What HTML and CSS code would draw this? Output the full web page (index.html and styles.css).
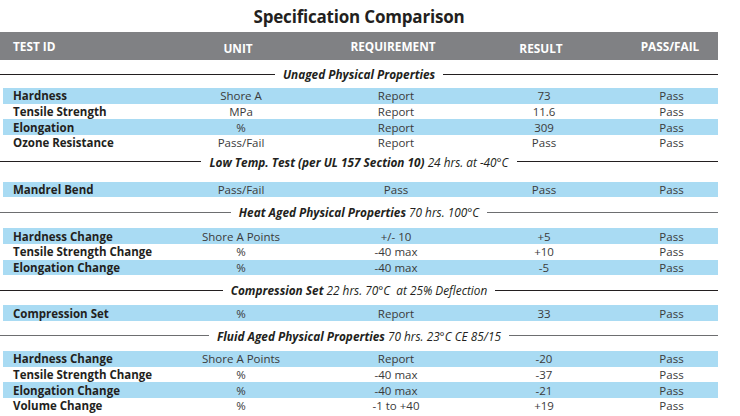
FILE: index.html
```html
<!DOCTYPE html>
<html lang="en">
<head>
<meta charset="utf-8">
<title>Specification Comparison</title>
<link rel="stylesheet" href="styles.css">
</head>
<body>
<div class="sheet">
  <h1 class="title">Specification Comparison</h1>
  <div class="thead grid">
    <div class="c1">TEST ID</div>
    <div class="c2 lower">UNIT</div>
    <div class="c3 upper">REQUIREMENT</div>
    <div class="c4 lower">RESULT</div>
    <div class="c5">PASS/FAIL</div>
  </div>

  <section class="sec sec-first">
    <div class="divider"><span class="dtext"><b>Unaged Physical Properties</b></span></div>
    <div class="rows">
      <div class="row grid band"><div class="c1">Hardness</div><div class="c2">Shore A</div><div class="c3">Report</div><div class="c4">73</div><div class="c5">Pass</div></div>
      <div class="row grid"><div class="c1">Tensile Strength</div><div class="c2">MPa</div><div class="c3">Report</div><div class="c4">11.6</div><div class="c5">Pass</div></div>
      <div class="row grid band"><div class="c1">Elongation</div><div class="c2">%</div><div class="c3">Report</div><div class="c4">309</div><div class="c5">Pass</div></div>
      <div class="row grid"><div class="c1">Ozone Resistance</div><div class="c2">Pass/Fail</div><div class="c3">Report</div><div class="c4">Pass</div><div class="c5">Pass</div></div>
    </div>
  </section>

  <section class="sec sec-lowtemp">
    <div class="divider"><span class="dtext"><b>Low Temp. Test (per UL 157 Section 10)</b> 24 hrs. at -40°C</span></div>
    <div class="rows">
      <div class="row grid band"><div class="c1">Mandrel Bend</div><div class="c2">Pass/Fail</div><div class="c3">Pass</div><div class="c4">Pass</div><div class="c5">Pass</div></div>
    </div>
  </section>

  <section class="sec sec-heat">
    <div class="divider divider-gray"><span class="dtext"><b>Heat Aged Physical Properties</b> 70 hrs. 100°C</span></div>
    <div class="rows">
      <div class="row grid band"><div class="c1">Hardness Change</div><div class="c2">Shore A Points</div><div class="c3">+/- 10</div><div class="c4">+5</div><div class="c5">Pass</div></div>
      <div class="row grid"><div class="c1">Tensile Strength Change</div><div class="c2">%</div><div class="c3">-40 max</div><div class="c4">+10</div><div class="c5">Pass</div></div>
      <div class="row grid band"><div class="c1">Elongation Change</div><div class="c2">%</div><div class="c3">-40 max</div><div class="c4">-5</div><div class="c5">Pass</div></div>
    </div>
  </section>

  <section class="sec">
    <div class="divider"><span class="dtext"><b>Compression Set</b> 22 hrs. 70°C&nbsp; at 25% Deflection</span></div>
    <div class="rows">
      <div class="row grid band"><div class="c1">Compression Set</div><div class="c2">%</div><div class="c3">Report</div><div class="c4">33</div><div class="c5">Pass</div></div>
    </div>
  </section>

  <section class="sec">
    <div class="divider divider-gray"><span class="dtext"><b>Fluid Aged Physical Properties</b> 70 hrs. 23°C CE 85/15</span></div>
    <div class="rows">
      <div class="row grid band"><div class="c1">Hardness Change</div><div class="c2">Shore A Points</div><div class="c3">Report</div><div class="c4">-20</div><div class="c5">Pass</div></div>
      <div class="row grid"><div class="c1">Tensile Strength Change</div><div class="c2">%</div><div class="c3">-40 max</div><div class="c4">-37</div><div class="c5">Pass</div></div>
      <div class="row grid band"><div class="c1">Elongation Change</div><div class="c2">%</div><div class="c3">-40 max</div><div class="c4">-21</div><div class="c5">Pass</div></div>
      <div class="row grid"><div class="c1">Volume Change</div><div class="c2">%</div><div class="c3">-1 to +40</div><div class="c4">+19</div><div class="c5">Pass</div></div>
    </div>
  </section>
</div>
</body>
</html>
```

FILE: styles.css
```css
html, body {
  margin: 0;
  padding: 0;
  background: #ffffff;
}

body {
  font-family: "Open Sans", "Liberation Sans", sans-serif;
  color: #3c3c3c;
  width: 740px;
  height: 416px;
  overflow: hidden;
}

.sheet {
  width: 718px;
}

.title {
  margin: 0;
  height: 32px;
  line-height: 34px;
  text-align: center;
  font-size: 17px;
  font-weight: 700;
  letter-spacing: -0.2px;
  color: #231f20;
}

.grid {
  display: grid;
  grid-template-columns: 170px 136px 174px 122px 1fr;
  align-items: center;
}

.grid > div {
  text-align: center;
  white-space: nowrap;
}

.grid > .c1 {
  text-align: left;
  padding-left: 13px;
}

.grid > .c5 {
  padding-left: 20px;
}

.thead {
  height: 28px;
  background: #808184;
  color: #ffffff;
  font-size: 11.8px;
  font-weight: 700;
  letter-spacing: 0;
}

.thead .lower {
  padding-top: 3px;
}

.thead .upper {
  padding-bottom: 1px;
}

.sec {
  padding-top: 7px;
}

.divider {
  height: 16px;
  display: flex;
  align-items: center;
  gap: 8px;
  margin-bottom: 7px;
}

.divider::before,
.divider::after {
  content: "";
  flex: 1;
  border-top: 1px solid #231f20;
}

.divider-gray::before,
.divider-gray::after {
  border-top-color: #6d6e70;
}

.dtext {
  font-size: 11.8px;
  font-style: italic;
  color: #231f20;
  white-space: nowrap;
}

.dtext b {
  font-weight: 700;
}

.sec-first {
  padding-top: 6px;
}

.sec-first .divider {
  margin-bottom: 6px;
}

.sec-lowtemp {
  padding-top: 3px;
}

.sec-lowtemp .divider {
  margin-bottom: 12px;
}

.sec-heat .divider {
  margin-bottom: 8px;
}

.row {
  height: 15.67px;
  font-size: 11.5px;
  color: #3a3a3a;
  margin-left: 3px;
}

.row > .c1 {
  padding-left: 10px;
  font-weight: 700;
  color: #231f20;
}

.band {
  background: #a9dbf3;
}
```
